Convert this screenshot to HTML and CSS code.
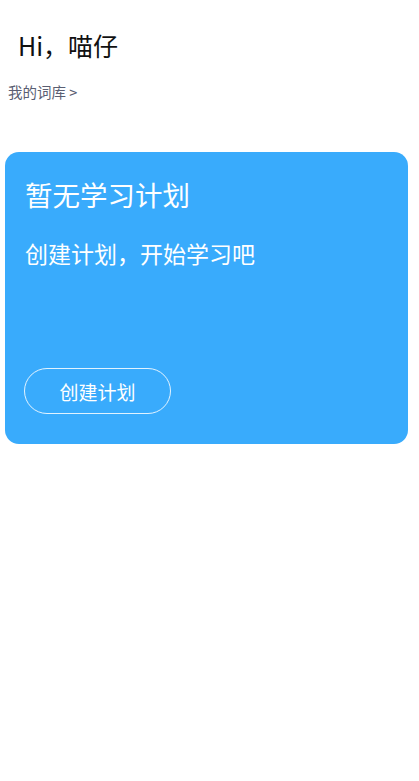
FILE: index.html
```html
<!DOCTYPE html>
<html lang="zh-CN">
<head>
<meta charset="utf-8">
<title>学习</title>
<link rel="stylesheet" href="styles.css">
</head>
<body>
<header class="greeting">
  <h1 class="hello">Hi，喵仔</h1>
  <a class="library" href="#">我的词库 &gt;</a>
</header>
<section class="plan-card">
  <h2 class="plan-title">暂无学习计划</h2>
  <p class="plan-sub">创建计划，开始学习吧</p>
  <button class="plan-btn" type="button">创建计划</button>
</section>
</body>
</html>
```
FILE: styles.css
```css
html, body {
  margin: 0;
  padding: 0;
  background: #ffffff;
}
body {
  font-family: "Noto Sans CJK SC", "Noto Sans", sans-serif;
  width: 419px;
}
.greeting {
  display: flex;
  flex-direction: column;
  padding-top: 28px;
}
.hello {
  margin: 0 0 0 18px;
  font-size: 25px;
  font-weight: 400;
  line-height: 34px;
  color: #111111;
}
.library {
  margin: 20px 0 0 8px;
  font-size: 14.5px;
  line-height: 20px;
  color: #5a5e72;
  text-decoration: none;
}
.plan-card {
  margin: 50px 0 0 5px;
  width: 403px;
  height: 292px;
  box-sizing: border-box;
  background: #39abfc;
  border-radius: 14px;
  padding: 24px 20px 30px 19px;
  display: flex;
  flex-direction: column;
  align-items: flex-start;
}
.plan-title {
  margin: 0 0 0 1px;
  font-size: 27.5px;
  font-weight: 400;
  line-height: 36px;
  color: #ffffff;
}
.plan-sub {
  margin: 26px 0 0 1px;
  font-size: 23px;
  font-weight: 400;
  line-height: 30px;
  color: #ffffff;
}
.plan-btn {
  margin-top: auto;
  width: 147px;
  height: 46px;
  border: 1px solid rgba(255, 255, 255, 0.85);
  border-radius: 23px;
  background: transparent;
  color: #ffffff;
  font-family: "Noto Sans CJK SC", "Noto Sans", sans-serif;
  font-size: 19px;
  padding: 0;
}
```
